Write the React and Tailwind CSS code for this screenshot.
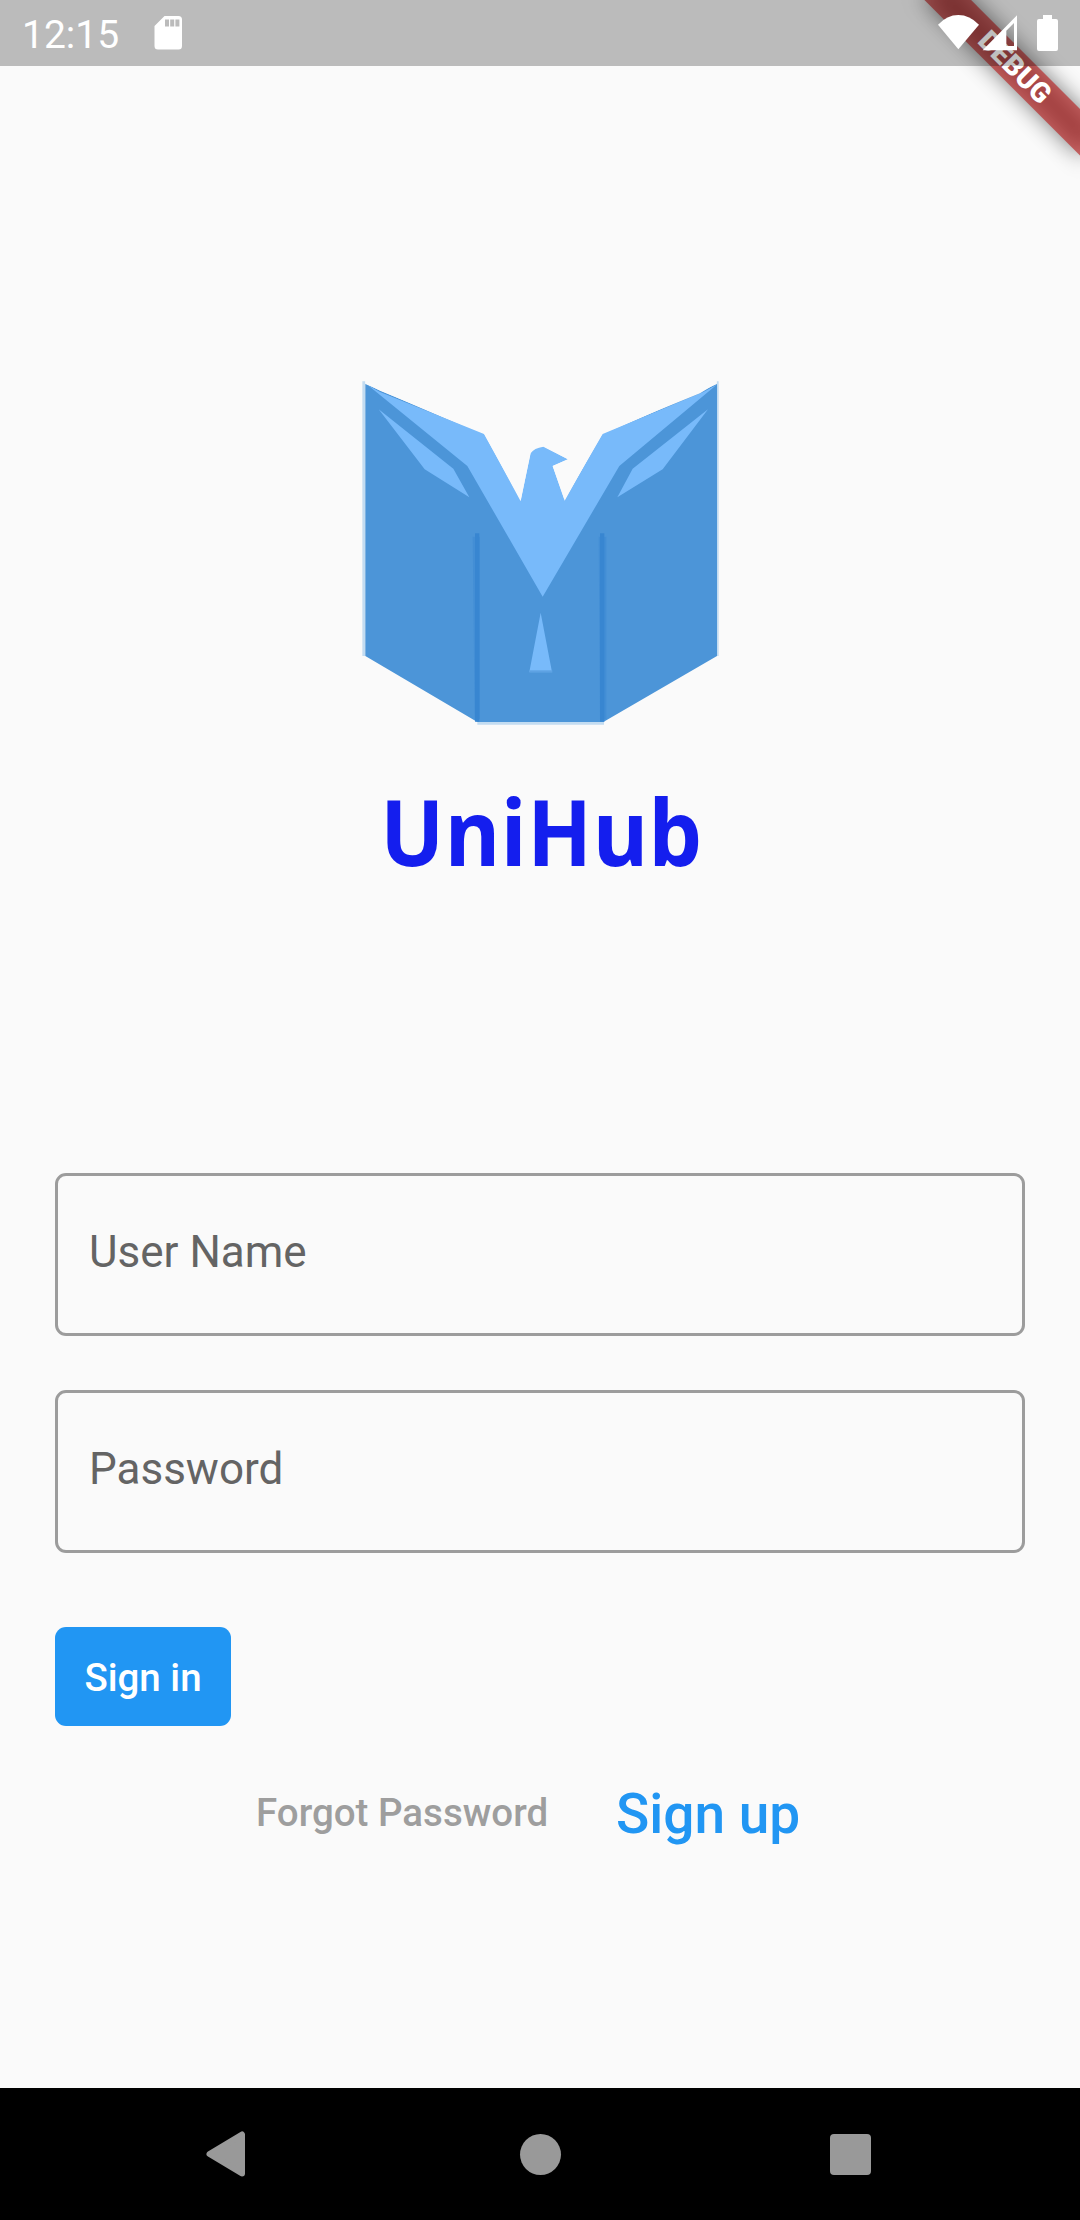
function StatusBar() {
  return (
    <header className="relative z-10 flex h-[66px] w-full shrink-0 items-center bg-black/25">
      <span className="ml-[22px] mt-[5px] w-[132px] text-[39px] leading-none text-white">12:15</span>
      <svg className="h-[36px] w-[30px]" viewBox="0 0 30 36">
        <path
          fill="#fff"
          fillRule="evenodd"
          d="M10.5 1H24.5a3.5 3.5 0 0 1 3.5 3.5V31a3.5 3.5 0 0 1-3.5 3.5H4A3.5 3.5 0 0 1 .5 31V11ZM11 4.5v7h4v-7ZM16.2 4.5v7h4v-7ZM21.4 4.5v7h4v-7Z"
        />
      </svg>
      <svg className="ml-auto h-[66px] w-[180px]" viewBox="0 0 540 198">
        <g fill="#fff">
          <path d="M175 148 114 74Q141 45 175 45T237 74Z" />
          <path fillRule="evenodd" d="M248 151 351 46V151ZM319 92V138H342V69Z" />
          <path d="M429 45H456V57H468Q474 57 474 63V147Q474 153 468 153H417Q411 153 411 147V63Q411 57 417 57H429Z" />
        </g>
      </svg>
    </header>
  );
}

function DebugBanner() {
  return (
    <div className="absolute right-0 top-0 h-[220px] w-[220px] overflow-hidden">
      <div className="absolute left-[110px] top-[77px] h-[33px] w-[220px] origin-[110px_-77px] rotate-45">
        <div className="absolute inset-0 bg-black/50 blur-[11px]" />
        <div className="absolute inset-0 flex items-center justify-center bg-[#b71c1c]/63 pl-[3px] text-[28px] font-black leading-none text-white">
          DEBUG
        </div>
      </div>
    </div>
  );
}

function BookLogo() {
  return (
    <svg className="h-[380px] w-[400px]" viewBox="0 0 1200 1140">
      <path fill="#c3dcf1" d="M67 64H76V888H67ZM1130 64H1136V888H1130ZM412 1083H792V1094H412Z" />
      <path fill="#4c95d8" d="M76 72V888L412 1086H790L1131 888V72L788 225L676 418H540L430 225Z" />
      <path
        fill="#78bafa"
        d="M84 76 120 96 432 222 542 420 572 280Q582 264 610 260L684 298 638 318 674 420 788 222 1090 96 1130 74 838 318 608 710 382 318Z"
      />
      <path fill="#fafafa" d="M76 60V70L120 92 432 220 542 424 572 276Q582 260 610 259L684 298 638 318 674 422 786 220 1080 100 1130 70V60Z" />
      <path fill="#78bafa" d="M116 148 340 326 388 412 254 328ZM1104 148 878 326 832 412 968 328ZM602 758 636 936H568Z" />
      <path fill="#5ea2e3" d="M568 931H637V938H568Z" />
      <path fill="#438ed5" d="M398 530H420V1078H404ZM776 530H799V1078H780Z" />
      <path fill="#3886d1" d="M405 520H418V1085H405ZM780 520H793V1085H780Z" />
    </svg>
  );
}

function Field({ label }) {
  return (
    <div className="flex h-[163px] w-full items-center rounded-[11px] border-[3px] border-[#9c9c9c] pb-[5px] pl-[31px] text-[44px] leading-none text-[#646464]">
      {label}
    </div>
  );
}

function NavBar() {
  return (
    <nav className="mt-auto flex h-[132px] shrink-0 items-center justify-between bg-black pl-[206px] pr-[209px]">
      <svg className="h-[46px] w-[40px]" viewBox="0 0 40 46">
        <path
          d="M36 3.5V42.5L3.5 23Z"
          fill="#999"
          stroke="#999"
          strokeWidth="6"
          strokeLinejoin="round"
        />
      </svg>
      <span className="ml-[4px] h-[41px] w-[41px] rounded-full bg-[#999]" />
      <span className="h-[41px] w-[41px] rounded-[4px] bg-[#999]" />
    </nav>
  );
}

export default function App() {
  return (
    <div className="relative flex h-[2220px] w-[1080px] flex-col overflow-hidden bg-[#fafafa] font-['Roboto',sans-serif]">
      <DebugBanner />
      <StatusBar />
      <section className="flex h-[1107px] shrink-0 flex-col items-center pt-[294px]">
        <BookLogo />
        <h1 className="ml-[3px] mt-[28px] scale-x-[0.93] whitespace-nowrap font-['Noto_Sans',sans-serif] text-[91px] font-bold leading-[126px] tracking-[1px] text-[#141eee]">
          UniHub
        </h1>
      </section>
      <form className="flex flex-col items-start gap-[54px] px-[55px]">
        <Field label="User Name" />
        <Field label="Password" />
        <button
          type="button"
          className="mt-[20px] h-[99px] w-[176px] rounded-[11px] bg-[#2196f3] pt-[3px] text-[38.5px] font-medium leading-none text-white"
        >
          Sign in
        </button>
      </form>
      <div className="mt-[47px] flex items-center pl-[256px] font-medium">
        <a className="mb-[3px] w-[360px] text-[38.5px] text-[#9e9e9e]">Forgot Password</a>
        <a className="text-[55px] text-[#2196f3]">Sign up</a>
      </div>
      <NavBar />
    </div>
  );
}
